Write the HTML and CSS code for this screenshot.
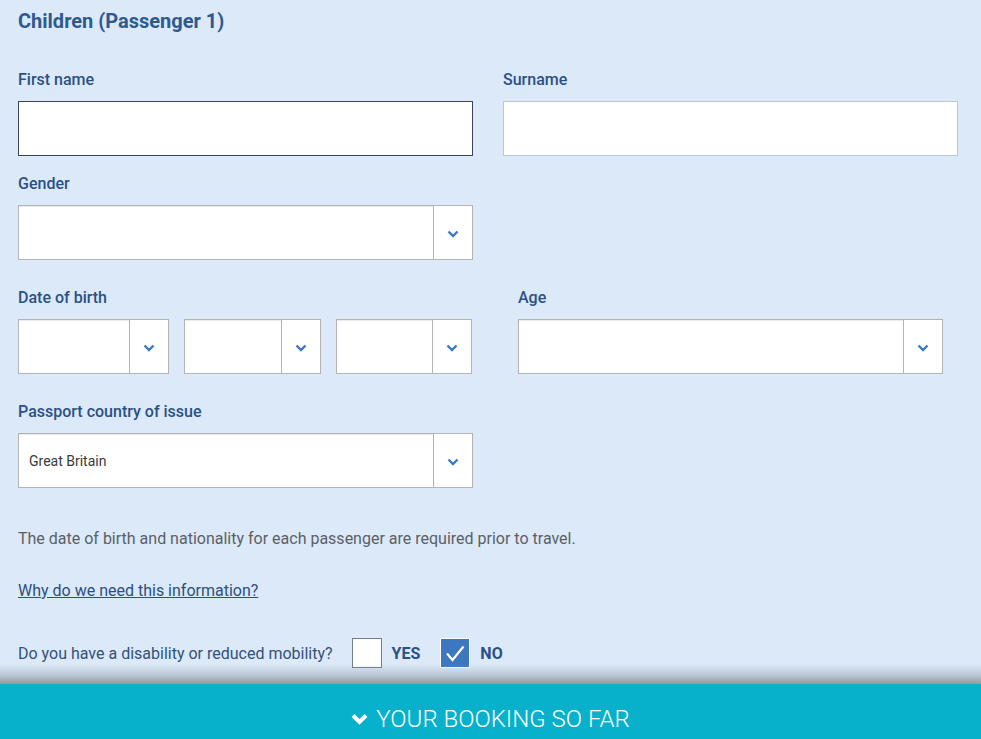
FILE: index.html
```html
<!DOCTYPE html>
<html lang="en">
<head>
<meta charset="utf-8">
<title>Passenger details</title>
<link rel="stylesheet" href="styles.css">
</head>
<body>
<main class="form">
  <h2 class="heading">Children (Passenger 1)</h2>

  <div class="row row-names">
    <div class="field">
      <label class="label">First name</label>
      <div class="input input-focus"></div>
    </div>
    <div class="field">
      <label class="label">Surname</label>
      <div class="input input-plain"></div>
    </div>
  </div>

  <div class="row row-gender">
    <div class="field">
      <label class="label">Gender</label>
      <div class="select">
        <div class="select-value"></div>
        <div class="select-arrow"><svg width="12" height="8" viewBox="0 0 12 8"><polyline points="1.5,1.5 6,6 10.5,1.5" fill="none" stroke="#3b78c8" stroke-width="2.4"/></svg></div>
      </div>
    </div>
  </div>

  <div class="row row-dob">
    <div class="field">
      <label class="label">Date of birth</label>
      <div class="dob">
        <div class="select">
          <div class="select-value"></div>
          <div class="select-arrow"><svg width="12" height="8" viewBox="0 0 12 8"><polyline points="1.5,1.5 6,6 10.5,1.5" fill="none" stroke="#3b78c8" stroke-width="2.4"/></svg></div>
        </div>
        <div class="select">
          <div class="select-value"></div>
          <div class="select-arrow"><svg width="12" height="8" viewBox="0 0 12 8"><polyline points="1.5,1.5 6,6 10.5,1.5" fill="none" stroke="#3b78c8" stroke-width="2.4"/></svg></div>
        </div>
        <div class="select">
          <div class="select-value"></div>
          <div class="select-arrow"><svg width="12" height="8" viewBox="0 0 12 8"><polyline points="1.5,1.5 6,6 10.5,1.5" fill="none" stroke="#3b78c8" stroke-width="2.4"/></svg></div>
        </div>
      </div>
    </div>
    <div class="field">
      <label class="label">Age</label>
      <div class="select">
        <div class="select-value"></div>
        <div class="select-arrow"><svg width="12" height="8" viewBox="0 0 12 8"><polyline points="1.5,1.5 6,6 10.5,1.5" fill="none" stroke="#3b78c8" stroke-width="2.4"/></svg></div>
      </div>
    </div>
  </div>

  <div class="row row-passport">
    <div class="field">
      <label class="label">Passport country of issue</label>
      <div class="select">
        <div class="select-value">Great Britain</div>
        <div class="select-arrow"><svg width="12" height="8" viewBox="0 0 12 8"><polyline points="1.5,1.5 6,6 10.5,1.5" fill="none" stroke="#3b78c8" stroke-width="2.4"/></svg></div>
      </div>
    </div>
  </div>

  <p class="note">The date of birth and nationality for each passenger are required prior to travel.</p>
  <p class="why"><a href="#" class="why-link">Why do we need this information?</a></p>

  <div class="mobility">
    <span class="mobility-q">Do you have a disability or reduced mobility?</span>
    <span class="check"></span>
    <span class="check-label">YES</span>
    <span class="check check-on"><svg width="28" height="28" viewBox="0 0 28 28"><polyline points="6,14.5 11.5,21 22.5,7.5" fill="none" stroke="#fff" stroke-width="2.2"/></svg></span>
    <span class="check-label">NO</span>
  </div>
</main>

<div class="booking">
  <div class="booking-shade"></div>
  <div class="booking-bar">
    <svg class="booking-icon" width="17" height="12" viewBox="0 0 17 12"><polyline points="2,2.5 8.5,9 15,2.5" fill="none" stroke="#fff" stroke-width="4"/></svg>
    <span>YOUR BOOKING SO FAR</span>
  </div>
</div>
</body>
</html>
```

FILE: styles.css
```css
* { box-sizing: border-box; }

html, body {
  margin: 0;
  padding: 0;
  background: #dce9f8;
  font-family: Roboto, "Noto Sans", Arial, sans-serif;
}

.form {
  padding: 9px 23px 90px 18px;
}

.heading {
  margin: 0;
  font-size: 20px;
  line-height: 24px;
  font-weight: 700;
  color: #2d5a90;
}

.row {
  display: grid;
}

.row-names {
  grid-template-columns: 455px 455px;
  column-gap: 30px;
  margin-top: 36px;
}

.row-gender {
  grid-template-columns: 455px;
  margin-top: 17px;
}

.row-dob {
  grid-template-columns: 454px 425px;
  column-gap: 46px;
  margin-top: 27px;
}

.row-passport {
  grid-template-columns: 455px;
  margin-top: 27px;
}

.label {
  display: block;
  font-size: 16px;
  line-height: 20px;
  font-weight: 500;
  color: #2a5185;
  padding-top: 1px;
  margin-bottom: 11px;
}

.input {
  height: 55px;
  background: #fff;
}

.input-focus { border: 1px solid #3a4656; }
.input-plain { border: 1px solid #b9c8dc; }

.select {
  display: flex;
  height: 55px;
  background: #fff;
  border: 1px solid #b3b3b3;
}

.select-value {
  flex: 1;
  display: flex;
  align-items: center;
  padding-left: 10px;
  font-size: 14px;
  color: #3a3a3a;
  box-shadow: inset 0 1px 0 #ebebeb;
}

.select-arrow {
  width: 39px;
  display: flex;
  align-items: center;
  justify-content: center;
  border-left: 1px solid #b3b3b3;
  padding-top: 2px;
}

.select-arrow svg { display: block; }

.dob {
  display: grid;
  grid-template-columns: 151px 137px 136px;
  column-gap: 15px;
}

.note {
  margin: 41px 0 0;
  font-size: 16px;
  line-height: 20px;
  color: #5b5f66;
}

.why {
  margin: 32px 0 0;
  font-size: 16px;
  line-height: 20px;
}

.why-link {
  color: #2c4f7e;
  text-decoration: underline;
}

.mobility {
  display: flex;
  align-items: center;
  margin-top: 37px;
  height: 30px;
  font-size: 16px;
}

.mobility-q {
  color: #34517a;
  margin-right: 19px;
}

.check {
  width: 30px;
  height: 30px;
  background: #fff;
  border: 1.5px solid #6f7e90;
  display: flex;
  align-items: center;
  justify-content: center;
}

.check-on {
  background: #3c77c0;
  border: 1px solid #fff;
}

.check-on svg { display: block; }

.check-label {
  font-weight: 700;
  color: #2a5185;
  margin-left: 10px;
  margin-right: 20px;
}

.booking {
  position: fixed;
  left: 0;
  right: 0;
  bottom: 0;
}

.booking-shade {
  height: 20px;
  background: linear-gradient(to bottom, rgba(150,160,172,0) 0%, rgba(150,160,172,0.45) 55%, rgba(140,148,160,0.95) 100%);
}

.booking-bar {
  height: 55px;
  background: #07b1cb;
  display: flex;
  align-items: center;
  justify-content: center;
  gap: 8px;
  color: #fff;
  font-size: 24px;
  font-weight: 300;
  padding-top: 15px;
}

.booking-icon { display: block; }
```
